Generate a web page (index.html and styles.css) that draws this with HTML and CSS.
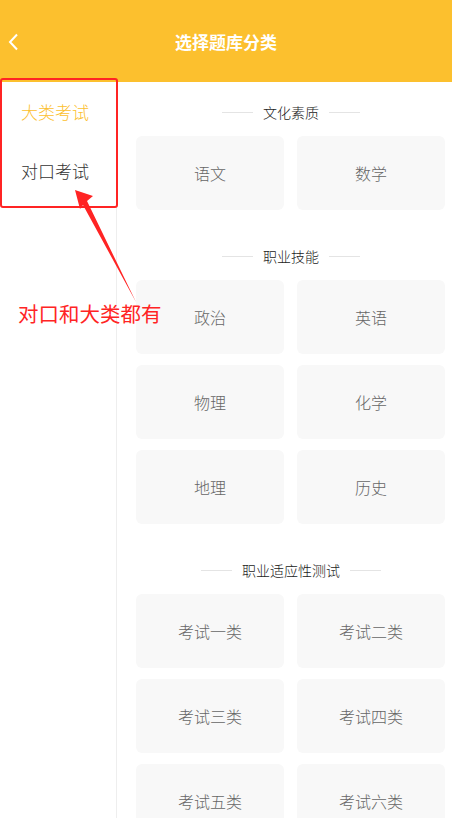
FILE: index.html
```html
<!DOCTYPE html>
<html>
    <head>
        <title>选择题库分类</title>
        <link rel="stylesheet" href="styles.css">
    </head>
    <body>
        <div class="header">
            <svg class="back" width="12" height="18" viewBox="0 0 12 18">
                <polyline points="9,1.5 2,9 9,16.5" fill="none" stroke="#fff" stroke-width="2"/>
            </svg>
            <span class="title">选择题库分类</span>
        </div>

        <div class="main">
            <ul class="side">
                <li class="active">大类考试</li>
                <li>对口考试</li>
            </ul>

            <div class="content">
                <div class="section">
                    <div class="section-title"><i></i>文化素质<i></i></div>
                    <div class="cards">
                        <div class="card">语文</div>
                        <div class="card">数学</div>
                    </div>
                </div>
                <div class="section">
                    <div class="section-title"><i></i>职业技能<i></i></div>
                    <div class="cards">
                        <div class="card">政治</div>
                        <div class="card">英语</div>
                        <div class="card">物理</div>
                        <div class="card">化学</div>
                        <div class="card">地理</div>
                        <div class="card">历史</div>
                    </div>
                </div>
                <div class="section">
                    <div class="section-title"><i></i>职业适应性测试<i></i></div>
                    <div class="cards">
                        <div class="card">考试一类</div>
                        <div class="card">考试二类</div>
                        <div class="card">考试三类</div>
                        <div class="card">考试四类</div>
                        <div class="card">考试五类</div>
                        <div class="card">考试六类</div>
                    </div>
                </div>
            </div>
        </div>

        <!-- annotation drawn over the screenshot -->
        <div class="mark-box"></div>
        <svg class="mark-arrow" width="452" height="818" viewBox="0 0 452 818">
            <polygon points="75,190 93,196 87,201 136,302 83,205 80,209" fill="#ff2424"/>
        </svg>
        <div class="mark-text">对口和大类都有</div>
    </body>
</html>
```

FILE: styles.css
```css
body {
    margin: 0;
    font-family: "Noto Sans CJK SC", "Noto Sans", sans-serif;
    background: #fff;
    width: 452px;
    height: 818px;
    overflow: hidden;
    position: relative;
}
    .header {
        position: relative;
        display: flex;
        align-items: center;
        justify-content: center;
        height: 82px;
        background: #fcc02e;
    }
    .header .back {
        position: absolute;
        left: 8px;
        top: 33px;
    }
    .header .title {
        color: #fff;
        font-size: 17px;
        font-weight: bold;
    }
    .main {
        display: flex;
        height: 736px;
    }
    .side {
        width: 116px;
        margin: 0;
        padding: 0;
        list-style: none;
        border-right: 1px solid #eeeeee;
    }
    .side li {
        height: 59px;
        line-height: 59px;
        padding-left: 21px;
        font-size: 17px;
        font-weight: 300;
        color: #333;
    }
    .side li.active {
        color: #fcc02e;
    }
    .content {
        flex: 1;
        padding: 20px 6px 0 19px;
    }
    .section {
        margin-bottom: 36px;
    }
    .section-title {
        display: flex;
        align-items: center;
        justify-content: center;
        gap: 10px;
        height: 20px;
        margin-bottom: 14px;
        font-size: 14px;
        font-weight: 300;
        color: #222;
    }
    .section-title i {
        display: block;
        width: 31px;
        border-top: 1px solid #e4e4e4;
    }
    .cards {
        display: grid;
        grid-template-columns: 148px 148px;
        gap: 11px 13px;
    }
    .card {
        height: 74px;
        line-height: 74px;
        text-align: center;
        background: #f8f8f8;
        border-radius: 6px;
        font-size: 16px;
        font-weight: 300;
        color: #666;
    }
    .mark-box {
        position: absolute;
        left: 0;
        top: 78px;
        width: 114px;
        height: 126px;
        border: 2px solid #ff2424;
        border-radius: 3px;
    }
    .mark-arrow {
        position: absolute;
        left: 0;
        top: 0;
    }
    .mark-text {
        position: absolute;
        left: 18px;
        top: 298px;
        font-size: 20.5px;
        line-height: 30px;
        color: #ff2424;
    }
```
